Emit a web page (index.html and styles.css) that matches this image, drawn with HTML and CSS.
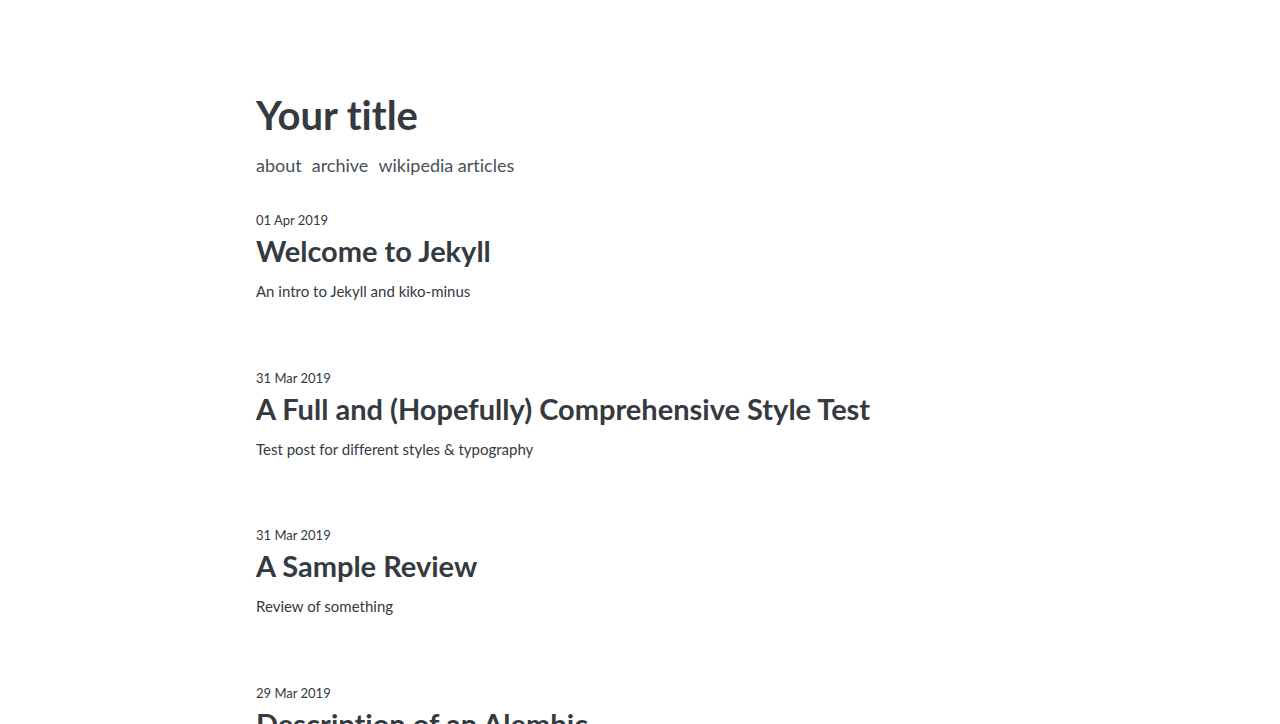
FILE: index.html
```html
<!DOCTYPE html>
<html lang="en">
<head>
<meta charset="utf-8">
<title>Your title</title>
<link rel="stylesheet" href="styles.css">
</head>
<body>
<div class="wrap">
  <header class="site-header">
    <h1 class="site-title">Your title</h1>
    <nav class="site-nav">
      <a href="#">about</a>
      <a href="#">archive</a>
      <a href="#">wikipedia articles</a>
    </nav>
  </header>
  <main class="posts">
    <article class="post">
      <div class="post-date">01 Apr 2019</div>
      <h2 class="post-title">Welcome to Jekyll</h2>
      <p class="post-desc">An intro to Jekyll and kiko-minus</p>
    </article>
    <article class="post">
      <div class="post-date">31 Mar 2019</div>
      <h2 class="post-title">A Full and (Hopefully) Comprehensive Style Test</h2>
      <p class="post-desc">Test post for different styles &amp; typography</p>
    </article>
    <article class="post">
      <div class="post-date">31 Mar 2019</div>
      <h2 class="post-title">A Sample Review</h2>
      <p class="post-desc">Review of something</p>
    </article>
    <article class="post">
      <div class="post-date">29 Mar 2019</div>
      <h2 class="post-title">Description of an Alembic</h2>
      <p class="post-desc">A description</p>
    </article>
  </main>
</div>
</body>
</html>
```
FILE: styles.css
```css
html, body {
  margin: 0;
  padding: 0;
  background: #ffffff;
}
body {
  font-family: "Lato", "Open Sans", sans-serif;
  font-variant-ligatures: none;
  color: #343a40;
}
.wrap {
  max-width: 768px;
  margin: 0 auto;
  padding-top: 90px;
}
.site-title {
  margin: 0;
  font-size: 40px;
  line-height: 50px;
  font-weight: 700;
}
.site-nav {
  display: flex;
  gap: 10px;
  margin-top: 13px;
  font-size: 18px;
  line-height: 24px;
}
.site-nav a {
  color: #495057;
  text-decoration: none;
}
.posts {
  margin-top: 34px;
}
.post {
  height: 157.7px;
}
.post-date {
  font-size: 13px;
  line-height: 18px;
}
.post-title {
  margin: 4px 0 0;
  font-size: 29px;
  line-height: 36px;
  font-weight: 700;
}
.post-desc {
  margin: 11px 0 0;
  font-size: 15px;
  line-height: 22px;
}
```
